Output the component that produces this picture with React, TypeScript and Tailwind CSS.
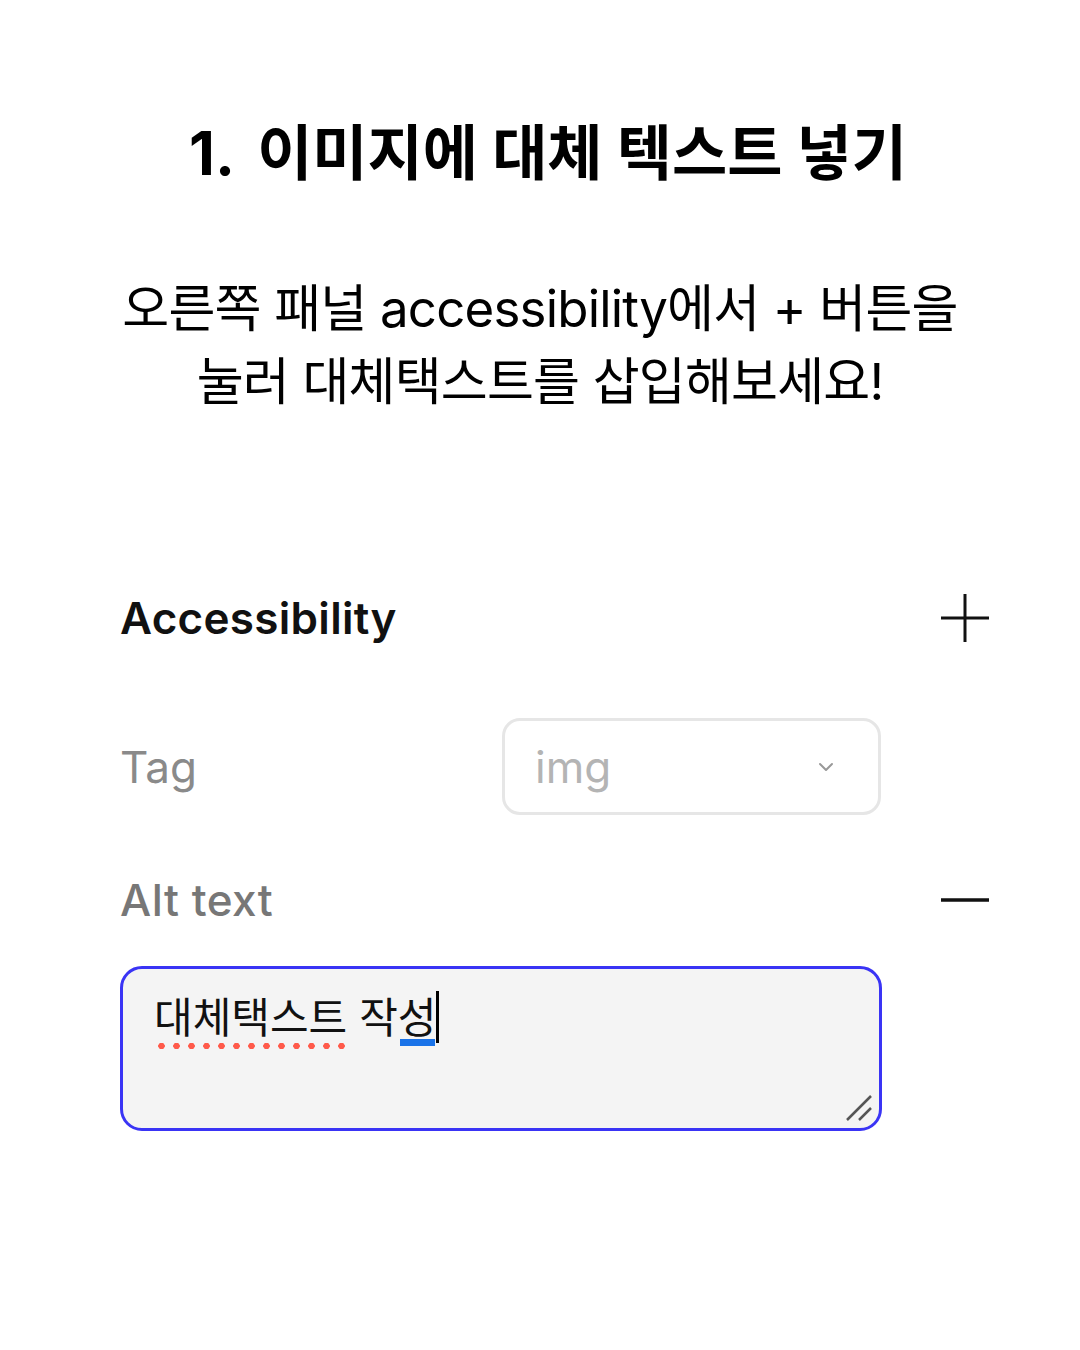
import { ChevronDown } from 'lucide-react';

const font = { fontFamily: 'Inter, "Noto Sans CJK KR", "Noto Sans", sans-serif' };

export default function App() {
  return (
    <div className="w-[1080px] h-[1350px] bg-white text-black flex flex-col items-center" style={font}>
      <h1 className="mt-[115px] ml-[16px] text-[60px] leading-[76px] font-bold">
        1.<span className="ml-[8px]"> </span>이미지에 대체 텍스트 넣기
      </h1>

      <p className="mt-[81px] text-center text-[51px] leading-[73px] font-normal tracking-[-0.8px]">
        오른쪽 패널 accessibility에서 + 버튼을
        <br />
        눌러 대체택스트를 삽입해보세요!
      </p>

      <div className="mt-[170px] w-full pl-[120px] pr-[90px]">
        <div className="flex items-center justify-between h-[60px]">
          <span className="text-[44px] font-semibold text-[#111] tracking-[0.3px]">Accessibility</span>
          <svg width="50" height="50" viewBox="0 0 50 50">
            <line x1="25" y1="1" x2="25" y2="49" stroke="#111" strokeWidth="3" />
            <line x1="1" y1="25" x2="49" y2="25" stroke="#111" strokeWidth="3" />
          </svg>
        </div>

        <div className="mt-[70px] flex items-center h-[97px]">
          <span className="w-[382px] text-[44px] text-[#8a8a8a]">Tag</span>
          <div className="w-[379px] h-[97px] rounded-[18px] border-[3px] border-[#e6e6e6] flex items-center justify-between pl-[30px] pr-[40px]">
            <span className="text-[44px] text-[#b4b4b4]">img</span>
            <ChevronDown className="w-[24px] h-[24px] text-[#999]" strokeWidth={2} />
          </div>
        </div>

        <div className="mt-[55px] flex items-center justify-between h-[60px]">
          <span className="text-[44px] font-medium text-[#777] tracking-[0.5px]">Alt text</span>
          <svg width="50" height="50" viewBox="0 0 50 50">
            <line x1="1" y1="25" x2="49" y2="25" stroke="#111" strokeWidth="3.5" />
          </svg>
        </div>

        <div className="mt-[36px] relative w-[762px] h-[165px] rounded-[22px] border-[3px] border-[#3a34f5] bg-[#f4f4f4] pl-[31px] pt-[16px]">
          <div className="flex items-end text-[42px] leading-[60px] text-[#111]" style={{ fontFamily: '"Noto Sans CJK KR", sans-serif' }}>
            <span className="relative">
              대체택스트
              <span className="absolute left-0 right-0 bottom-[-5px] h-[8px] bg-[radial-gradient(circle,#ff5a4a_3px,transparent_3.5px)] bg-[length:15px_8px]" />
            </span>
            <span className="ml-[12px]">작</span>
            <span className="relative">
              성
              <span className="absolute left-[2px] right-[1px] bottom-[-1px] h-[7px] bg-[#1a73e8]" />
            </span>
            <span className="w-[3px] h-[52px] bg-black mb-[2px]" />
          </div>
          <svg className="absolute right-[6px] bottom-[6px]" width="30" height="30" viewBox="0 0 30 30">
            <line x1="4" y1="28" x2="28" y2="4" stroke="#555" strokeWidth="2.5" />
            <line x1="16" y1="28" x2="28" y2="16" stroke="#555" strokeWidth="2.5" />
          </svg>
        </div>
      </div>
    </div>
  );
}
